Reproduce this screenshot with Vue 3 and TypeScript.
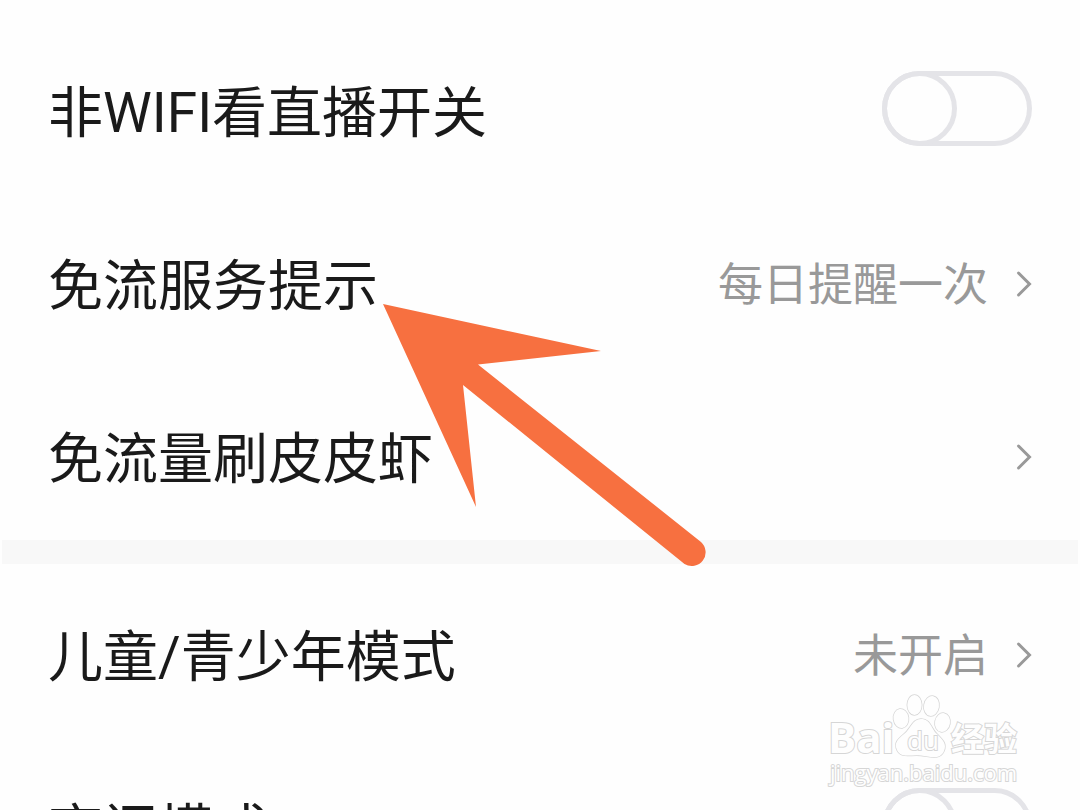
<script setup lang="ts">
import { reactive } from 'vue'

interface Row {
  id: string
  label: string
  kind: 'switch' | 'link'
  value?: string
}

const sections: Row[][] = [
  [
    { id: 'live', label: '非WIFI看直播开关', kind: 'switch' },
    { id: 'notice', label: '免流服务提示', kind: 'link', value: '每日提醒一次' },
    { id: 'free', label: '免流量刷皮皮虾', kind: 'link' },
  ],
  [
    { id: 'teen', label: '儿童/青少年模式', kind: 'link', value: '未开启' },
    { id: 'night', label: '夜间模式', kind: 'switch' },
  ],
]

const enabled = reactive<Record<string, boolean>>({ live: false, night: false })
</script>

<template>
  <main class="page">
    <section v-for="(rows, i) in sections" :key="i" class="section">
      <template v-for="row in rows" :key="row.id">
        <label v-if="row.kind === 'switch'" class="row" :for="row.id">
          <span class="label">{{ row.label }}</span>
          <input :id="row.id" v-model="enabled[row.id]" class="switch" type="checkbox" />
        </label>
        <button v-else class="row" type="button">
          <span class="label">{{ row.label }}</span>
          <span class="value">{{ row.value }}</span>
          <svg class="chevron" viewBox="0 0 16 28" aria-hidden="true">
            <path d="M2.500 3 13.500 14 2.500 25" />
          </svg>
        </button>
      </template>
    </section>

    <svg class="arrow" viewBox="0 0 324 264" aria-hidden="true">
      <path d="M0 0 218 47 95 60.5 318 238A13.8 13.8 0 0 1 301.500 260L80 81 93 203Z" />
    </svg>

    <div class="watermark">
      <div class="brand">
        <span class="bai">Bai</span>
        <span class="paw">
          <svg viewBox="0 0 60 64" aria-hidden="true">
            <ellipse cx="8" cy="24.500" rx="7.500" ry="9.500" transform="rotate(-8 8 24.500)" />
            <ellipse cx="21.500" cy="11" rx="7.200" ry="10" />
            <ellipse cx="38.500" cy="12" rx="7.500" ry="10" transform="rotate(10 38.500 12)" />
            <ellipse cx="49.500" cy="28.500" rx="7.500" ry="9.500" transform="rotate(10 49.500 28.500)" />
            <path d="M28 25C19 25 18 35 11 40C4 46 1 49 4 56C8 65 18 60 28 61.500C38 63 47 66 51 57C54 50 50 46 44 40C38 35 38 25 28 25Z" />
          </svg>
          <span class="du">du</span>
        </span>
        <span class="jingyan">经验</span>
      </div>
      <div class="url">jingyan.baidu.com</div>
    </div>
  </main>
</template>

<style>
body {
  margin: 0;
  background: #fefefe;
}
</style>

<style scoped>
.page {
  position: relative;
  height: 100vh;
  overflow: hidden;
  background: #fefefe;
  font-family: Roboto, "Noto Sans CJK SC", sans-serif;
}

.section {
  display: flex;
  flex-direction: column;
  gap: 23px;
  padding: 36px 0 8px;
}

.section + .section {
  padding-top: 16px;
}

.section + .section::before {
  content: "";
  height: 24px;
  margin: -16px 2px -7px;
  background: #f8f8f8;
}

.row {
  display: flex;
  align-items: center;
  box-sizing: border-box;
  width: 100%;
  height: 150px;
  padding: 0 48px;
  border: 0;
  background: none;
  color: #1a1a1a;
  font-family: inherit;
  font-size: 55px;
  line-height: 80px;
  text-align: left;
  cursor: pointer;
}

.label {
  flex: 1;
  padding-top: 4px;
  white-space: nowrap;
}

.value {
  padding-top: 4px;
  color: #999;
  font-size: 45px;
  white-space: nowrap;
}

.chevron {
  width: 16px;
  height: 28px;
  margin-left: 28px;
}

.chevron path {
  fill: none;
  stroke: #999;
  stroke-width: 3;
  stroke-linecap: round;
}

.switch {
  appearance: none;
  box-sizing: border-box;
  width: 150px;
  height: 75px;
  margin: 0 0 5px;
  border: 5px solid #e4e4e8;
  border-radius: 38px;
  cursor: pointer;
}

.switch::before {
  content: "";
  display: block;
  box-sizing: border-box;
  width: 75px;
  height: 75px;
  margin: -5px;
  border: 5px solid #e4e4e8;
  border-radius: 50%;
}

.switch:checked::before {
  margin-left: 70px;
}

.arrow {
  position: absolute;
  top: 304px;
  left: 383px;
  width: 324px;
  height: 264px;
  fill: #f77040;
  pointer-events: none;
}

.watermark {
  position: absolute;
  top: 694px;
  right: 58px;
  width: 194px;
  color: #fefefe;
  -webkit-text-stroke: 2px #d6d6d6;
  paint-order: stroke fill;
  pointer-events: none;
}

.brand {
  display: flex;
  align-items: flex-end;
  height: 64px;
}

.bai {
  width: 65px;
  font: bold 42px/42px "Open Sans", sans-serif;
}

.paw {
  display: grid;
  place-items: end center;
  width: 58px;
  height: 64px;
}

.paw svg,
.du {
  grid-area: 1 / 1;
}

.paw svg {
  overflow: visible;
  width: 60px;
  height: 64px;
  fill: #fefefe;
  stroke: #d6d6d6;
  stroke-width: 1.5;
}

.du {
  font: 26px/36px "Open Sans", sans-serif;
}

.jingyan {
  font: bold 33px/42px "Noto Sans CJK SC", sans-serif;
}

.url {
  padding-left: 2px;
  font: 22px/28px "Open Sans", sans-serif;
}
</style>
